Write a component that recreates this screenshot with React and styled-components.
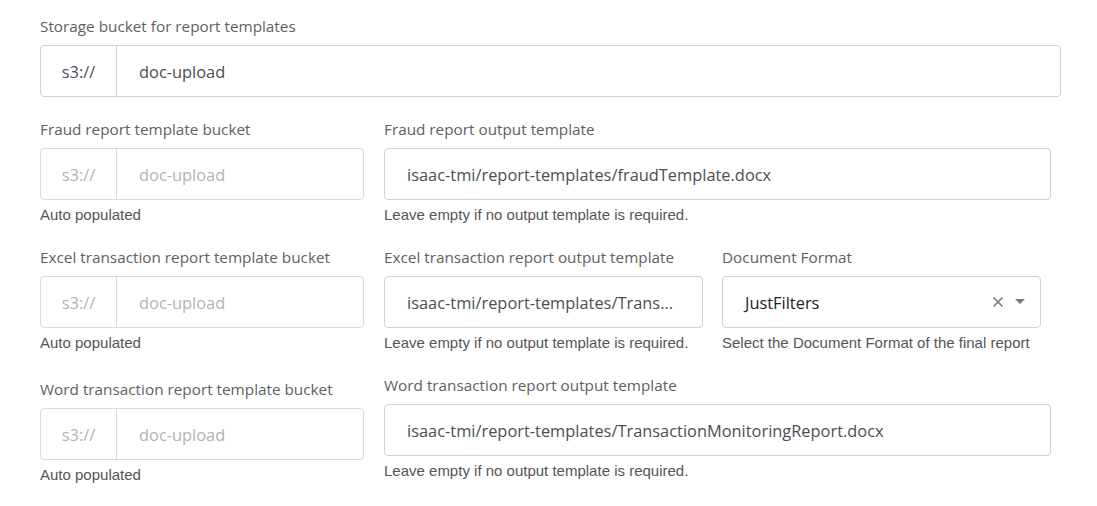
import styled, { createGlobalStyle } from "styled-components"

const GlobalStyle = createGlobalStyle`
  body {
    margin: 0;
    background: #fff;
    font-family: "Open Sans", "Segoe UI", sans-serif;
  }
`

const Form = styled.div`
  padding: 16px 0 0 40px;
  display: flex;
  flex-direction: column;
`

const Row = styled.div`
  display: flex;
  gap: 20px;
  margin-bottom: ${props => props.$gap ?? 24}px;
`

const Field = styled.div`
  display: flex;
  flex-direction: column;
  width: ${props => props.$width}px;
  margin-top: ${props => props.$offset || 0}px;
  margin-left: ${props => props.$shift || 0}px;
`

const Label = styled.label`
  font-size: 15.3px;
  line-height: 20px;
  color: #5f5f5f;
  margin-bottom: 9px;
  white-space: nowrap;
`

const Box = styled.div`
  display: flex;
  align-items: center;
  height: 52px;
  box-sizing: border-box;
  border: 1px solid ${props => props.$disabled ? "#dadada" : "#d0d0d0"};
  border-radius: 4px;
  background: #fff;
  font-size: 16.4px;
  color: ${props => props.$disabled ? "#b3b3b3" : "#4a4f55"};
`

const Prefix = styled.div`
  width: 75px;
  height: 100%;
  display: flex;
  align-items: center;
  justify-content: center;
  border-right: 1px solid ${props => props.$disabled ? "#dadada" : "#d0d0d0"};
  flex-shrink: 0;
`

const Value = styled.div`
  flex: 1;
  min-width: 0;
  padding: 0 22px;
  white-space: nowrap;
  overflow: hidden;
  text-overflow: ellipsis;
`

const SelectValue = styled(Value)`
  color: #222;
`

const Controls = styled.div`
  display: flex;
  align-items: center;
  gap: 10px;
  padding-right: 14px;
  color: #7a7a7a;
`

const Help = styled.div`
  font-family: "Liberation Sans", Arial, sans-serif;
  font-size: 15px;
  line-height: 16px;
  color: #555;
  margin-top: 7px;
  white-space: nowrap;
`

const BucketInput = ({ value, disabled }) => (
  <Box $disabled={disabled}>
    <Prefix $disabled={disabled}>s3://</Prefix>
    <Value>{value}</Value>
  </Box>
)

const TextInput = ({ value }) => (
  <Box>
    <Value>{value}</Value>
  </Box>
)

const Select = ({ value }) => (
  <Box>
    <SelectValue>{value}</SelectValue>
    <Controls>
      <svg width="12" height="12" viewBox="0 0 12 12">
        <path d="M1.5 1.5 L10.5 10.5 M10.5 1.5 L1.5 10.5" stroke="currentColor" strokeWidth="1.6" />
      </svg>
      <svg width="12" height="8" viewBox="0 0 12 8">
        <path d="M1 1 L11 1 L6 6 Z" fill="currentColor" />
      </svg>
    </Controls>
  </Box>
)

const AUTO = "Auto populated"
const EMPTY_OK = "Leave empty if no output template is required."

export default function App() {
  return (
    <>
      <GlobalStyle />
      <Form>
        <Row $gap={22}>
          <Field $width={1021}>
            <Label>Storage bucket for report templates</Label>
            <BucketInput value="doc-upload" />
          </Field>
        </Row>

        <Row>
          <Field $width={324}>
            <Label>Fraud report template bucket</Label>
            <BucketInput value="doc-upload" disabled />
            <Help>{AUTO}</Help>
          </Field>
          <Field $width={667}>
            <Label>Fraud report output template</Label>
            <TextInput value="isaac-tmi/report-templates/fraudTemplate.docx" />
            <Help>{EMPTY_OK}</Help>
          </Field>
        </Row>

        <Row>
          <Field $width={324}>
            <Label>Excel transaction report template bucket</Label>
            <BucketInput value="doc-upload" disabled />
            <Help>{AUTO}</Help>
          </Field>
          <Field $width={319}>
            <Label>Excel transaction report output template</Label>
            <TextInput value="isaac-tmi/report-templates/TransactionMonitoringReport.xlsx" />
            <Help>{EMPTY_OK}</Help>
          </Field>
          <Field $width={319} $shift={-1}>
            <Label>Document Format</Label>
            <Select value="JustFilters" />
            <Help>Select the Document Format of the final report</Help>
          </Field>
        </Row>

        <Row $gap={0}>
          <Field $width={324} $offset={4}>
            <Label>Word transaction report template bucket</Label>
            <BucketInput value="doc-upload" disabled />
            <Help>{AUTO}</Help>
          </Field>
          <Field $width={667}>
            <Label>Word transaction report output template</Label>
            <TextInput value="isaac-tmi/report-templates/TransactionMonitoringReport.docx" />
            <Help>{EMPTY_OK}</Help>
          </Field>
        </Row>
      </Form>
    </>
  )
}
